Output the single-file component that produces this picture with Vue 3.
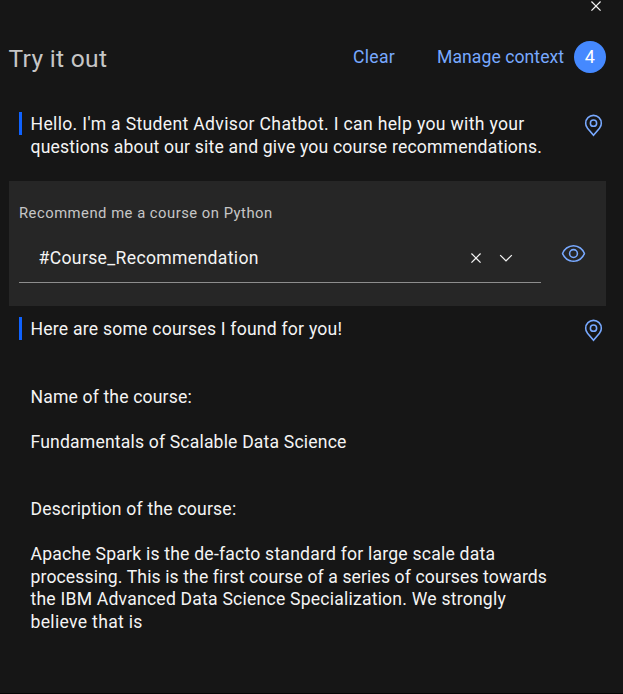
<script setup>
const greeting = [
  { text: "Hello. I'm a Student Advisor Chatbot. I can help you with your", cls: 'g1' },
  { text: 'questions about our site and give you course recommendations.', cls: 'g2' },
]
const reply = [
  { text: 'Here are some courses I found for you!', cls: 'r1' },
  { text: 'Name of the course:', cls: 'r2 gap-lg' },
  { text: 'Fundamentals of Scalable Data Science', cls: 'r3 gap-sm' },
  { text: 'Description of the course:', cls: 'r4 gap-lg' },
  { text: 'Apache Spark is the de-facto standard for large scale data', cls: 'r5 gap-sm' },
  { text: 'processing. This is the first course of a series of courses towards', cls: 'r6' },
  { text: 'the IBM Advanced Data Science Specialization. We strongly', cls: 'r7' },
  { text: 'believe that is', cls: 'r8' },
]
const messages = { greeting, reply }
const closePath = 'M24 9.4 22.6 8 16 14.6 9.4 8 8 9.4 14.6 16 8 22.6 9.4 24 16 17.4 22.6 24 24 22.6 17.4 16z'
const pinPath = 'M16,18a5,5,0,1,1,5-5A5,5,0,0,1,16,18Zm0-8a3,3,0,1,0,3,3A3,3,0,0,0,16,10Z M16,30,7.5645,20.0513c-.0479-.0571-.3482-.4515-.3482-.4515A10.8888,10.8888,0,0,1,5,13a11,11,0,0,1,22,0,10.8844,10.8844,0,0,1-2.2148,6.5973l-.0015.0025s-.3.3944-.3447.4474ZM8.8125,18.395c.001.0007.2334.3082.2866.3744L16,26.9079l6.91-8.15c.0439-.0552.2783-.3649.2788-.3657A8.901,8.901,0,0,0,25,13,9,9,0,1,0,7,13a8.9054,8.9054,0,0,0,1.8125,5.395Z'
</script>

<template>
  <main class="panel">
    <div class="top">
      <svg class="icon-sm" viewBox="0 0 32 32"><path :d="closePath" /></svg>
    </div>
    <header class="head">
      <h1 class="title"><span>Try it out</span></h1>
      <a class="link clear">Clear</a>
      <a class="link manage">Manage context</a>
      <span class="badge">4</span>
    </header>

    <section class="message greeting">
      <div class="bar"></div>
      <div class="body">
        <p v-for="l in messages.greeting" :key="l.text" :class="l.cls">{{ l.text }}</p>
      </div>
      <svg class="icon-lg" viewBox="0 0 32 32"><path :d="pinPath" /></svg>
    </section>

    <section class="intent">
      <div class="field">
        <label class="label">Recommend me a course on Python</label>
        <div class="select">
          <span class="value">#Course_Recommendation</span>
          <svg class="icon-sm" viewBox="0 0 32 32"><path :d="closePath" /></svg>
          <svg class="icon-sm" viewBox="0 0 16 16"><path d="M8 11 3 6l.7-.7L8 9.6l4.3-4.3.7.7z" /></svg>
        </div>
      </div>
      <svg class="icon-lg eye" viewBox="0 0 32 32">
        <path d="M30.94,15.66A16.69,16.69,0,0,0,16,5,16.69,16.69,0,0,0,1.06,15.66a1,1,0,0,0,0,.68A16.69,16.69,0,0,0,16,27,16.69,16.69,0,0,0,30.94,16.34,1,1,0,0,0,30.94,15.66ZM16,25c-5.3,0-10.9-3.93-12.93-9C5.1,10.93,10.7,7,16,7s10.9,3.93,12.93,9C26.9,21.07,21.3,25,16,25Z" />
        <path d="M16,10a6,6,0,1,0,6,6A6,6,0,0,0,16,10Zm0,10a4,4,0,1,1,4-4A4,4,0,0,1,16,20Z" />
      </svg>
    </section>

    <section class="message reply">
      <div class="bar"></div>
      <div class="body">
        <p v-for="l in messages.reply" :key="l.text" :class="l.cls">{{ l.text }}</p>
      </div>
      <svg class="icon-lg" viewBox="0 0 32 32"><path :d="pinPath" /></svg>
    </section>
  </main>
</template>

<style>
body {
  background: #161616;
  overflow: hidden;
}
</style>

<style scoped>
.panel {
  box-sizing: border-box;
  height: 694px;
  padding: 0 17px 0 9px;
  background: #161616;
  border-bottom: 1px solid #050505;
  color: #f4f4f4;
  font: 17.6px/22.5px Roboto, 'Liberation Sans', sans-serif;
  overflow: hidden;
}
p, h1 { margin: 0; font-weight: 400; }
svg { display: block; flex: none; }
.icon-sm { width: 20px; height: 20px; fill: #f4f4f4; }
.icon-lg { width: 25px; height: 25px; fill: #78a9ff; }

.top { display: flex; justify-content: flex-end; height: 16px; }
.top .icon-sm { margin: -4px 0 0; }

.head { display: flex; align-items: center; height: 32px; margin-top: 25px; white-space: nowrap; }
.title {
  flex: 1;
  margin-left: -0.5px;
  padding-top: 3px;
  font-size: 24.6px;
  line-height: 32px;
  letter-spacing: 0.3px;
  color: #c6c6c6;
}
.link { color: #78a9ff; }
.clear { width: 84px; letter-spacing: 0.3px; }
.manage { width: 137px; letter-spacing: 0.06px; }
.badge {
  width: 31.5px;
  height: 32px;
  margin-right: 0.5px;
  border-radius: 50%;
  background: #4589ff;
  color: #fff;
  font-size: 18px;
  line-height: 32px;
  text-align: center;
}

.message { display: flex; align-items: flex-start; padding-left: 10px; }
.greeting { margin-top: 39px; height: 69px; }
.reply { margin-top: 11px; }
.bar { width: 3px; height: 23px; background: #0f62fe; }
.body { flex: 1; padding: 1px 0 0 8.5px; white-space: nowrap; }
.message .icon-lg { margin-top: 1px; }
.gap-lg { margin-top: 45px; }
.gap-sm { margin-top: 22.5px; }
.g1 { letter-spacing: 0.33px; }
.g2 { letter-spacing: 0.18px; }
.r1 { letter-spacing: 0.22px; }
.r2 { letter-spacing: 0.15px; }
.r3 { letter-spacing: 0.17px; }
.r4 { letter-spacing: 0.2px; }
.r5 { letter-spacing: 0.21px; }
.r6 { letter-spacing: 0.108px; }
.r7 { letter-spacing: 0.21px; }
.r8 { letter-spacing: 0.31px; }

.intent { display: flex; height: 125px; background: #262626; }
.field { width: 522px; margin-left: 10px; }
.label {
  display: block;
  margin-top: 22px;
  font-size: 14.8px;
  line-height: 20px;
  letter-spacing: 0.5px;
  color: #c6c6c6;
}
.select {
  box-sizing: border-box;
  display: flex;
  align-items: center;
  gap: 10px;
  height: 50px;
  margin-top: 10px;
  padding: 0 25px 0 19.5px;
  border-bottom: 1px solid #8d8d8d;
}
.value { flex: 1; padding-top: 1px; letter-spacing: 0.34px; }
.eye { margin: 60px 0 0 20px; }
</style>
